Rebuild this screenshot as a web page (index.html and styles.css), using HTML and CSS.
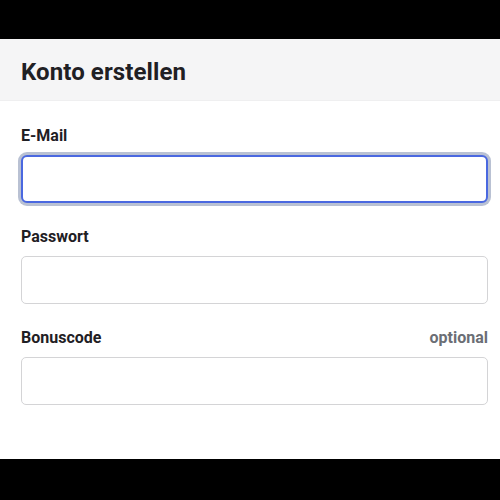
FILE: index.html
```html
<!DOCTYPE html>
<html lang="de">
    <head>
        <meta charset="UTF-8" />
        <meta name="viewport" content="width=device-width, initial-scale=1.0" />
        <title>Konto erstellen</title>
        <link rel="stylesheet" href="styles.css">
    </head>
    <body>
        <div class="sheet">
            <div class="sheet-header">
                <h1>Konto erstellen</h1>
            </div>

            <form class="sheet-body">
                <div class="field">
                    <label class="field-label" for="email">E-Mail</label>
                    <input class="field-input is-focused" id="email" type="email" />
                </div>
                <div class="field">
                    <label class="field-label" for="password">Passwort</label>
                    <input class="field-input" id="password" type="password" />
                </div>
                <div class="field">
                    <div class="field-row">
                        <label class="field-label" for="bonus">Bonuscode</label>
                        <span class="field-hint">optional</span>
                    </div>
                    <input class="field-input" id="bonus" type="text" />
                </div>
            </form>
        </div>
    </body>
</html>
```

FILE: styles.css
```css
:root {
    --frame: #000000;
    --header-bg: #f5f5f6;
    --surface: #ffffff;
    --text: #1f2024;
    --text-secondary: #6b6e75;
    --border: #d4d4d6;
    --focus: #4a68e0;
    --focus-ring: #b9c1d3;
}

* {
    margin: 0;
    padding: 0;
    box-sizing: border-box;
}

html,
body {
    height: 100%;
}

body {
    font-family: Roboto, "Liberation Sans", sans-serif;
    background-color: var(--frame);
    color: var(--text);
    padding: 39px 0 41px;
}

.sheet {
    height: 100%;
    background-color: var(--surface);
    display: flex;
    flex-direction: column;
}

.sheet-header {
    height: 62px;
    display: flex;
    align-items: center;
    padding: 0 21px;
    background-color: var(--header-bg);
    border-bottom: 1px solid #efeff0;
}

h1 {
    font-size: 24px;
    font-weight: 700;
    letter-spacing: 0.1px;
    padding-top: 4px;
}

.sheet-body {
    padding: 25px 12px 0 21px;
    display: flex;
    flex-direction: column;
    gap: 24px;
}

.field {
    display: flex;
    flex-direction: column;
    gap: 9px;
}

.field-row {
    display: flex;
    justify-content: space-between;
    align-items: baseline;
}

.field-label {
    font-size: 16px;
    font-weight: 700;
    line-height: 20px;
}

.field-hint {
    font-size: 16px;
    font-weight: 700;
    line-height: 20px;
    color: var(--text-secondary);
}

.field-input {
    height: 48px;
    width: 100%;
    border: 1px solid var(--border);
    border-radius: 5px;
    background-color: var(--surface);
    font: inherit;
    outline: none;
}

.field-input.is-focused {
    border: 2px solid var(--focus);
    border-radius: 6px;
    box-shadow: 0 0 0 3px var(--focus-ring);
}
```
